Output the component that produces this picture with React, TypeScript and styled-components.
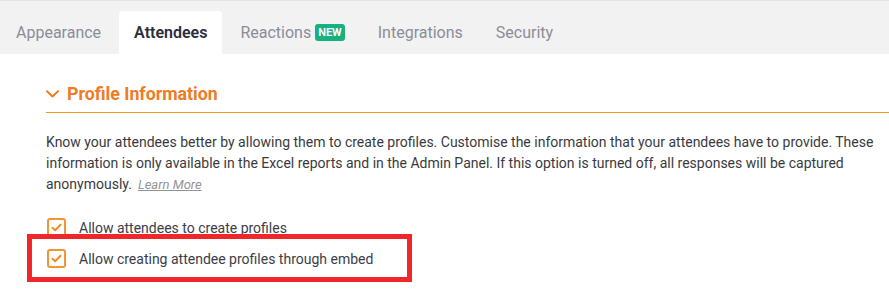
import React from 'react'
import styled, { createGlobalStyle } from 'styled-components'

const GlobalStyle = createGlobalStyle`
  body {
    margin: 0;
    background: #ffffff;
    font-family: Roboto, "Liberation Sans", Arial, sans-serif;
  }
`

const tabs = [
  { label: 'Appearance' },
  { label: 'Attendees', active: true },
  { label: 'Reactions', badge: 'NEW' },
  { label: 'Integrations' },
  { label: 'Security' },
]

const options = [
  { label: 'Allow attendees to create profiles', checked: true },
  { label: 'Allow creating attendee profiles through embed', checked: true, highlight: true },
]

function CheckIcon() {
  return (
    <svg width="11" height="9" viewBox="0 0 11 9" fill="none">
      <path d="M1.5 4.8 L4.2 7.2 L9.5 1.8" stroke="#f08a24" strokeWidth="2" strokeLinecap="round" strokeLinejoin="round" />
    </svg>
  )
}

function Chevron() {
  return (
    <svg width="13" height="8" viewBox="0 0 13 8" fill="none">
      <path d="M1 1.2 L6.5 6.4 L12 1.2" stroke="#ef7b25" strokeWidth="2" strokeLinecap="round" strokeLinejoin="round" />
    </svg>
  )
}

function App() {
  return (
    <>
      <GlobalStyle />
      <Page>
        <TabBar>
          {tabs.map(tab => (
            <Tab key={tab.label} $active={tab.active}>
              {tab.label}
              {tab.badge ? <Badge>{tab.badge}</Badge> : null}
            </Tab>
          ))}
        </TabBar>

        <Content>
          <SectionHeader>
            <Chevron />
            <SectionTitle>Profile Information</SectionTitle>
          </SectionHeader>

          <Description>
            Know your attendees better by allowing them to create profiles. Customise the information that your attendees have to provide. These
            information is only available in the Excel reports and in the Admin Panel. If this option is turned off, all responses will be captured
            anonymously.<LearnMore>Learn More</LearnMore>
          </Description>

          <OptionList>
            {options.map(opt => (
              <OptionRow key={opt.label} $highlight={opt.highlight}>
                <CheckBox>{opt.checked ? <CheckIcon /> : null}</CheckBox>
                <OptionLabel>{opt.label}</OptionLabel>
              </OptionRow>
            ))}
          </OptionList>
        </Content>
      </Page>
    </>
  )
}

export default App


const Page = styled.div`
  width: 889px;
  height: 291px;
  overflow: hidden;
  background: #ffffff;
`

const TabBar = styled.div`
  display: flex;
  align-items: flex-end;
  gap: 3px;
  height: 53px;
  padding-left: 1px;
  background: #f2f2f2;
  border-top: 1px solid #e4e4e4;
`

const Tab = styled.div<{ $active?: boolean }>`
  display: flex;
  align-items: center;
  height: 43px;
  padding: 0 15px 1px;
  font-size: 16px;
  font-weight: ${p => (p.$active ? 600 : 400)};
  color: ${p => (p.$active ? '#2b2d3a' : '#8a8d98')};
  background: ${p => (p.$active ? '#ffffff' : 'transparent')};
  border-radius: 4px 4px 0 0;
  box-sizing: border-box;
`

const Badge = styled.span`
  margin-left: 4px;
  padding: 2px 3px;
  font-size: 11px;
  font-weight: 700;
  line-height: 13px;
  color: #ffffff;
  background: #19b07f;
  border-radius: 3px;
`

const Content = styled.div`
  padding-left: 46px;
`

const SectionHeader = styled.div`
  display: flex;
  align-items: center;
  gap: 8px;
  margin-top: 28px;
  height: 24px;
  padding-bottom: 6px;
  border-bottom: 1px solid #f39325;
`

const SectionTitle = styled.div`
  font-size: 17.75px;
  font-weight: 700;
  color: #ef7b25;
  line-height: 24px;
`

const Description = styled.p`
  margin: 19px 0 0 0;
  padding-right: 10px;
  font-size: 14px;
  line-height: 21px;
  color: #3a3a3e;
`

const LearnMore = styled.a`
  display: inline-block;
  margin-left: 6px;
  font-size: 13px;
  line-height: 21px;
  font-style: italic;
  color: #949494;
  text-decoration: underline;
  cursor: pointer;
`

const OptionList = styled.div`
  display: flex;
  flex-direction: column;
  margin-top: 17px;
`

const OptionRow = styled.div<{ $highlight?: boolean }>`
  position: relative;
  display: flex;
  align-items: center;
  gap: 13px;
  height: 31px;
  padding-left: 1px;

  ${p => p.$highlight && `
    &::after {
      content: '';
      position: absolute;
      left: -19px;
      top: -9px;
      width: 385px;
      height: 48px;
      box-sizing: border-box;
      border: 5px solid #f0262b;
      pointer-events: none;
    }
  `}
`

const CheckBox = styled.div`
  display: flex;
  align-items: center;
  justify-content: center;
  width: 19px;
  height: 19px;
  box-sizing: border-box;
  border: 2px solid #f19632;
  border-radius: 3px;
  background: #ffffff;
`

const OptionLabel = styled.span`
  font-size: 14px;
  color: #3b3d48;
`
